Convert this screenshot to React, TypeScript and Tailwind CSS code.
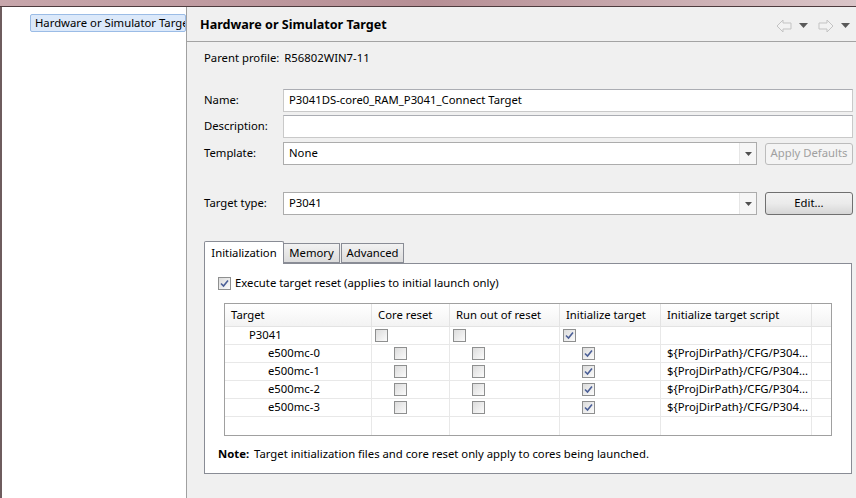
import React from "react";

const font = { fontFamily: '"Noto Sans", "Open Sans", Arial, sans-serif' };

function Check({ on }: { on?: boolean }) {
  return (
    <span className="inline-flex h-[13px] w-[13px] items-center justify-center border border-[#8e8f8f] bg-gradient-to-br from-[#dcdcdc] to-[#fbfbfb]">
      {on && (
        <svg width="9" height="9" viewBox="0 0 9 9">
          <path d="M1 4.5 L3.5 7 L8 1.5" fill="none" stroke="#4b5f97" strokeWidth="1.6" />
        </svg>
      )}
    </span>
  );
}

function Arrow({ dir }: { dir: "l" | "r" }) {
  return (
    <svg width="16" height="14" viewBox="0 0 16 14">
      <path
        d={dir === "l" ? "M1 7 L7 1 L7 4 L15 4 L15 10 L7 10 L7 13 Z" : "M15 7 L9 1 L9 4 L1 4 L1 10 L9 10 L9 13 Z"}
        fill="#f2f2f2"
        stroke="#c3c3c3"
      />
    </svg>
  );
}

function Tri() {
  return (
    <svg width="9" height="5" viewBox="0 0 9 5">
      <path d="M0 0 L9 0 L4.5 5 Z" fill="#595959" />
    </svg>
  );
}

function DropBtn() {
  return (
    <span className="flex h-full w-[17px] items-center justify-center border-l border-[#e6e6e6] bg-[#f6f6f6]">
      <svg width="7" height="4" viewBox="0 0 7 4">
        <path d="M0 0 L7 0 L3.5 4 Z" fill="#505050" />
      </svg>
    </span>
  );
}

const cols = [147, 78, 110, 101, 151, 19];

const rows = [
  { name: "P3041", indent: "pl-[24px]", boxes: "pl-[3px]", child: false },
  { name: "e500mc-0", indent: "pl-[43px]", boxes: "pl-[22px]", child: true },
  { name: "e500mc-1", indent: "pl-[43px]", boxes: "pl-[22px]", child: true },
  { name: "e500mc-2", indent: "pl-[43px]", boxes: "pl-[22px]", child: true },
  { name: "e500mc-3", indent: "pl-[43px]", boxes: "pl-[22px]", child: true },
];

export default function App() {
  return (
    <div className="flex h-[498px] w-[856px] flex-col overflow-hidden bg-[#f0f0f0] text-[11.3px] text-black" style={font}>
      <div className="h-[7px] shrink-0 border-b border-[#4d3b3e] bg-gradient-to-r from-[#c7a6ab] via-[#b68f95] to-[#dac5c8]" />
      <div className="flex min-h-0 flex-1">
        <div className="w-[187px] shrink-0 border-l-2 border-r border-l-[#6e5c5e] border-r-[#a0a0a0] bg-white pl-[28px] pt-[7px]">
          <div className="h-[18px] overflow-hidden whitespace-nowrap rounded-[2px] border border-[#9bbce6] bg-[#dce9fa] pl-[4px] leading-[16px]">
            Hardware or Simulator Target
          </div>
        </div>
        <div className="flex min-w-0 flex-1 flex-col">
          <div className="flex h-[35px] shrink-0 items-center justify-between border-b border-[#a3a3a3] pl-[13px] pr-[6px] pt-[3px]">
            <div className="text-[12.6px] font-bold">Hardware or Simulator Target</div>
            <div className="flex items-center gap-[4px]">
              <Arrow dir="l" />
              <span className="mr-[6px] ml-[3px]"><Tri /></span>
              <Arrow dir="r" />
              <span className="ml-[3px]"><Tri /></span>
            </div>
          </div>
          <div className="flex flex-col pl-[17px] pr-[3px]">
            <div className="mt-[7px] flex h-[18px] items-center">
              <span>Parent profile:</span>
              <span className="ml-[5px]">R56802WIN7-11</span>
            </div>
            <div className="mt-[22px] flex h-[23px] items-center">
              <span className="w-[79px] shrink-0">Name:</span>
              <div className="flex h-[23px] flex-1 items-center border border-[#c9c9c9] border-t-[#abadb3] bg-white pl-[5px]">
                P3041DS-core0_RAM_P3041_Connect Target
              </div>
            </div>
            <div className="mt-[3px] flex h-[23px] items-center">
              <span className="w-[79px] shrink-0">Description:</span>
              <div className="h-[23px] flex-1 border border-[#c9c9c9] border-t-[#abadb3] bg-white" />
            </div>
            <div className="mt-[4px] flex h-[23px] items-center">
              <span className="w-[79px] shrink-0">Template:</span>
              <div className="flex h-[23px] flex-1 items-center border border-[#acacac] bg-white pl-[5px]">
                <span className="flex-1">None</span>
                <DropBtn />
              </div>
              <div className="ml-[8px] flex h-[22px] w-[88px] items-center justify-center rounded-[3px] border border-[#bcbcbc] bg-[#f4f4f4] text-[#a0a0a0]">
                Apply Defaults
              </div>
            </div>
            <div className="mt-[27px] flex h-[23px] items-center">
              <span className="w-[79px] shrink-0">Target type:</span>
              <div className="flex h-[23px] flex-1 items-center border border-[#acacac] bg-white pl-[5px]">
                <span className="flex-1">P3041</span>
                <DropBtn />
              </div>
              <div className="ml-[8px] flex h-[23px] w-[88px] items-center justify-center rounded-[3px] border border-[#707070] bg-gradient-to-b from-[#f2f2f2] via-[#ebebeb] to-[#d6d6d6]">
                Edit...
              </div>
            </div>
            <div className="mt-[26px] flex items-end">
              <div className="relative z-10 -mb-px flex h-[23px] w-[80px] items-center justify-center rounded-t-[2px] border border-b-0 border-[#898c95] bg-white">
                Initialization
              </div>
              <div className="flex h-[20px] w-[56px] items-center justify-center border border-l-0 border-[#898c95] bg-gradient-to-b from-[#f2f2f2] to-[#dcdcdc]">
                Memory
              </div>
              <div className="ml-px flex h-[20px] w-[63px] items-center justify-center border border-[#898c95] bg-gradient-to-b from-[#f2f2f2] to-[#dcdcdc]">
                Advanced
              </div>
            </div>
            <div className="mr-px flex h-[211px] flex-col border border-[#898c95] bg-white pl-[13px]">
              <div className="mt-[12px] flex h-[14px] items-center gap-[4px]">
                <Check on />
                <span>Execute target reset (applies to initial launch only)</span>
              </div>
              <div className="ml-[6px] mt-[13px] flex w-[608px] flex-col border border-[#a0a0a0]">
                <div className="flex h-[23px] border-b border-[#e3e3e3] bg-gradient-to-b from-[#ffffff] to-[#f3f3f3]">
                  {["Target", "Core reset", "Run out of reset", "Initialize target", "Initialize target script", ""].map((h, i) => (
                    <div
                      key={i}
                      className="flex items-center border-r border-[#e3e3e3] pl-[6px] last:border-r-0"
                      style={{ width: cols[i] }}
                    >
                      {h}
                    </div>
                  ))}
                </div>
                {rows.map((r) => (
                  <div key={r.name} className="flex h-[18px] border-b border-[#e8e8e8]">
                    <div className={`flex items-center border-r border-[#e8e8e8] ${r.indent}`} style={{ width: cols[0] }}>
                      {r.name}
                    </div>
                    <div className={`flex items-center border-r border-[#e8e8e8] ${r.boxes}`} style={{ width: cols[1] }}>
                      <Check />
                    </div>
                    <div className={`flex items-center border-r border-[#e8e8e8] ${r.boxes}`} style={{ width: cols[2] }}>
                      <Check />
                    </div>
                    <div className={`flex items-center border-r border-[#e8e8e8] ${r.boxes}`} style={{ width: cols[3] }}>
                      <Check on />
                    </div>
                    <div className="flex items-center border-r border-[#e8e8e8] pl-[6px]" style={{ width: cols[4] }}>
                      {r.child ? "${ProjDirPath}/CFG/P304..." : ""}
                    </div>
                    <div style={{ width: cols[5] }} />
                  </div>
                ))}
                <div className="flex h-[18px]">
                  {cols.map((w, i) => (
                    <div key={i} className="border-r border-[#e8e8e8] last:border-r-0" style={{ width: w }} />
                  ))}
                </div>
              </div>
              <div className="mt-[9px] flex h-[18px] items-center">
                <span className="font-bold">Note:</span>
                <span className="ml-[5px]">Target initialization files and core reset only apply to cores being launched.</span>
              </div>
            </div>
          </div>
        </div>
      </div>
    </div>
  );
}
